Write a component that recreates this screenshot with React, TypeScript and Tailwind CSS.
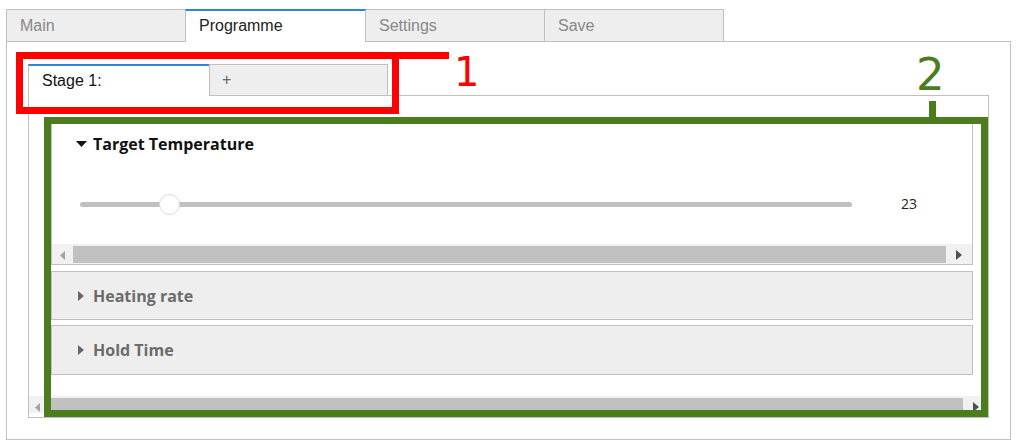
import React from "react";

const GREEN = "#4b7d1e";

function TriRight({ color }: { color: string }) {
  return (
    <svg width="6" height="10" viewBox="0 0 6 10" className="block">
      <path d="M0 0 L6 5 L0 10 Z" fill={color} />
    </svg>
  );
}
function TriLeft({ color }: { color: string }) {
  return (
    <svg width="5" height="9" viewBox="0 0 5 9" className="block">
      <path d="M5 0 L0 4.5 L5 9 Z" fill={color} />
    </svg>
  );
}
function TriDown() {
  return (
    <svg width="11" height="6" viewBox="0 0 11 6" className="block">
      <path d="M0 0 L11 0 L5.5 6 Z" fill="#111" />
    </svg>
  );
}

function Scrollbar({ left, right, thumbH }: { left: number; right: number; thumbH: string }) {
  return (
    <div className="flex h-full bg-[#f1f1f1] items-start pt-[2px]">
      <div style={{ width: left }} className="flex justify-center pt-[5px] shrink-0">
        <TriLeft color="#a3a3a3" />
      </div>
      <div className={`flex-1 bg-[#c1c1c1] ${thumbH}`} />
      <div style={{ width: right }} className="flex justify-center pt-[4px] shrink-0">
        <TriRight color="#505050" />
      </div>
    </div>
  );
}

export default function App() {
  return (
    <div
      className="relative w-[1020px] h-[447px] bg-white overflow-hidden"
      style={{ fontFamily: '"Liberation Sans", Arial, sans-serif' }}
    >
      <div className="pt-[9px] pl-[6px]">
        {/* outer tabs */}
        <div className="flex h-[32px] items-start">
          <div className="w-[180px] h-[32px] border-l border-t border-r border-[#c0c0c0] bg-[#eeeeee] text-[#888] text-[16px] pl-[13px] flex items-center">
            Main
          </div>
          <div className="relative z-10 -ml-px w-[181px] h-[33px] border-l border-r border-[#c0c0c0] border-t-2 border-t-[#2f86d6] bg-white text-[#222] text-[16px] pl-[13px] flex items-center pb-[1px]">
            Programme
          </div>
          <div className="-ml-px w-[180px] h-[32px] border-l border-t border-r border-[#c0c0c0] bg-[#eeeeee] text-[#888] text-[16px] pl-[13px] flex items-center">
            Settings
          </div>
          <div className="-ml-px w-[180px] h-[32px] border-l border-t border-r border-[#c0c0c0] bg-[#eeeeee] text-[#888] text-[16px] pl-[13px] flex items-center">
            Save
          </div>
        </div>

        {/* outer panel */}
        <div className="w-[1005px] h-[399px] border border-[#c0c0c0] pt-[22px] pl-[21px]">
          {/* inner tabs */}
          <div className="flex h-[31px] items-start">
            <div className="relative z-10 w-[181px] h-[32px] border-l border-[#c0c0c0] border-t-2 border-t-[#2f86d6] bg-white text-[#111] text-[16px] pl-[13px] flex items-center pb-[1px]">
              Stage 1:
            </div>
            <div className="w-[179px] h-[31px] border-l border-t border-r border-[#c0c0c0] bg-[#eeeeee] text-[#666] text-[16px] pl-[12px] flex items-center">
              +
            </div>
          </div>

          {/* inner panel */}
          <div className="w-[961px] h-[323px] border border-[#c0c0c0] flex flex-col">
            <div
              className="pt-[26px] pl-[22px]"
              style={{ fontFamily: '"Open Sans", "Noto Sans", sans-serif' }}
            >
              {/* item 1 expanded */}
              <div className="w-[922px] h-[143px] border border-[#c0c0c0] bg-white flex flex-col">
                <div className="h-[41px] flex items-center pl-[24px] gap-[6px]">
                  <TriDown />
                  <span className="text-[16px] font-bold text-[#111] leading-none">Target Temperature</span>
                </div>
                <div className="h-[80px] flex items-center pl-[28px]">
                  <div className="relative w-[772px] h-[5px] rounded-full bg-[#c1c1c1]">
                    <div className="absolute left-[79px] top-[-8px] w-[21px] h-[21px] rounded-full bg-white border border-[#d9d9d9]" />
                  </div>
                  <span className="ml-[49px] text-[14px] text-[#222] leading-none">23</span>
                </div>
                <div className="h-[20px]">
                  <Scrollbar left={21} right={26} thumbH="h-[17px]" />
                </div>
              </div>

              <div className="mt-[6px] w-[922px] h-[49px] border border-[#c0c0c0] bg-[#eeeeee] flex items-center pl-[26px] gap-[9px]">
                <TriRight color="#666" />
                <span className="text-[16px] font-bold text-[#6b6b6b] leading-none">Heating rate</span>
              </div>
              <div className="mt-[5px] w-[922px] h-[50px] border border-[#c0c0c0] bg-[#eeeeee] flex items-center pl-[26px] gap-[9px]">
                <TriRight color="#666" />
                <span className="text-[16px] font-bold text-[#6b6b6b] leading-none">Hold Time</span>
              </div>
            </div>

            <div className="mt-auto mb-[4px] h-[17px]">
              <Scrollbar left={16} right={25} thumbH="h-[15px]" />
            </div>
          </div>
        </div>
      </div>

      {/* annotation 1 */}
      <div className="absolute left-[16px] top-[52px] w-[383px] h-[62px] border-[7px] border-[#ff0000]" />
      <div className="absolute left-[392px] top-[52px] w-[57px] h-[7px] bg-[#ff0000]" />
      <div
        className="absolute left-[454px] top-[52px] text-[40px] leading-[40px] text-[#ff0000]"
        style={{ fontFamily: '"DejaVu Sans", sans-serif' }}
      >
        1
      </div>

      {/* annotation 2 */}
      <div className="absolute left-[44px] top-[117px] w-[944px] h-[300px] border-[7px] border-[#4b7d1e]" />
      <div className="absolute left-[929px] top-[101px] w-[7px] h-[16px] bg-[#4b7d1e]" />
      <div
        className="absolute left-[916px] top-[52px] text-[45px] leading-[45px]"
        style={{ fontFamily: '"DejaVu Sans", sans-serif', color: GREEN }}
      >
        2
      </div>
    </div>
  );
}
